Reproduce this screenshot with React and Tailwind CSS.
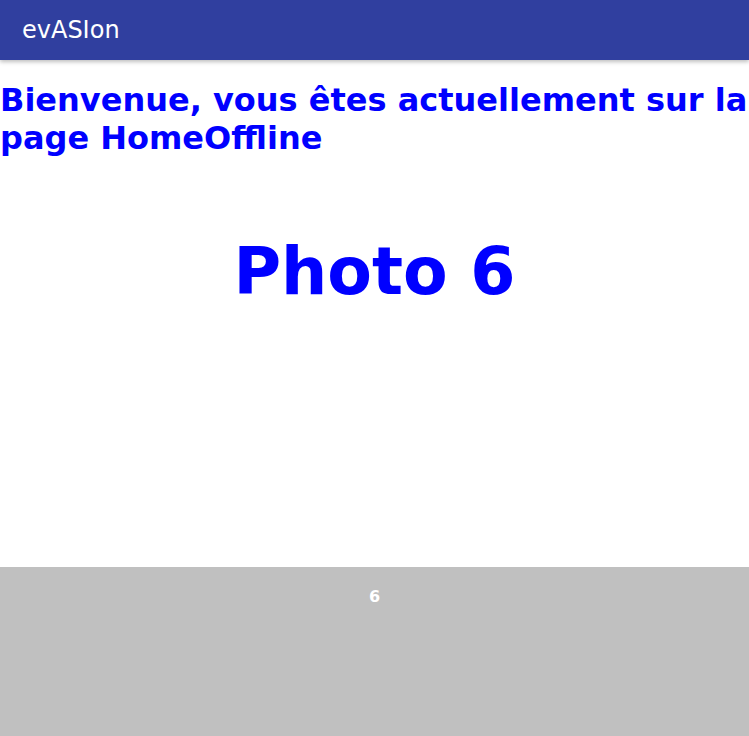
export default function App() {
  return (
    <div className="flex min-h-[736px] flex-col bg-white" style={{ fontFamily: '"DejaVu Sans", sans-serif' }}>
      <header className="relative z-10 flex h-[60px] items-center bg-[#303f9f] px-[22px] shadow-[0_2px_4px_rgba(0,0,0,0.25)]">
        <span className="text-[24px] leading-[28px] text-white">evASIon</span>
      </header>
      <h1 className="mt-[21px] text-[32px] font-bold leading-[38px] text-[#0000ff]">
        Bienvenue, vous êtes actuellement sur la page HomeOffline
      </h1>
      <div className="flex h-[410px] flex-col items-center pt-[77px]">
        <div className="text-[65px] font-bold leading-[76px] text-[#0000ff]">Photo 6</div>
      </div>
      <footer className="flex h-[169px] justify-center bg-[#c0c0c0] pt-[20px]">
        <span className="text-[16px] font-bold leading-[19px] text-white">6</span>
      </footer>
    </div>
  );
}
